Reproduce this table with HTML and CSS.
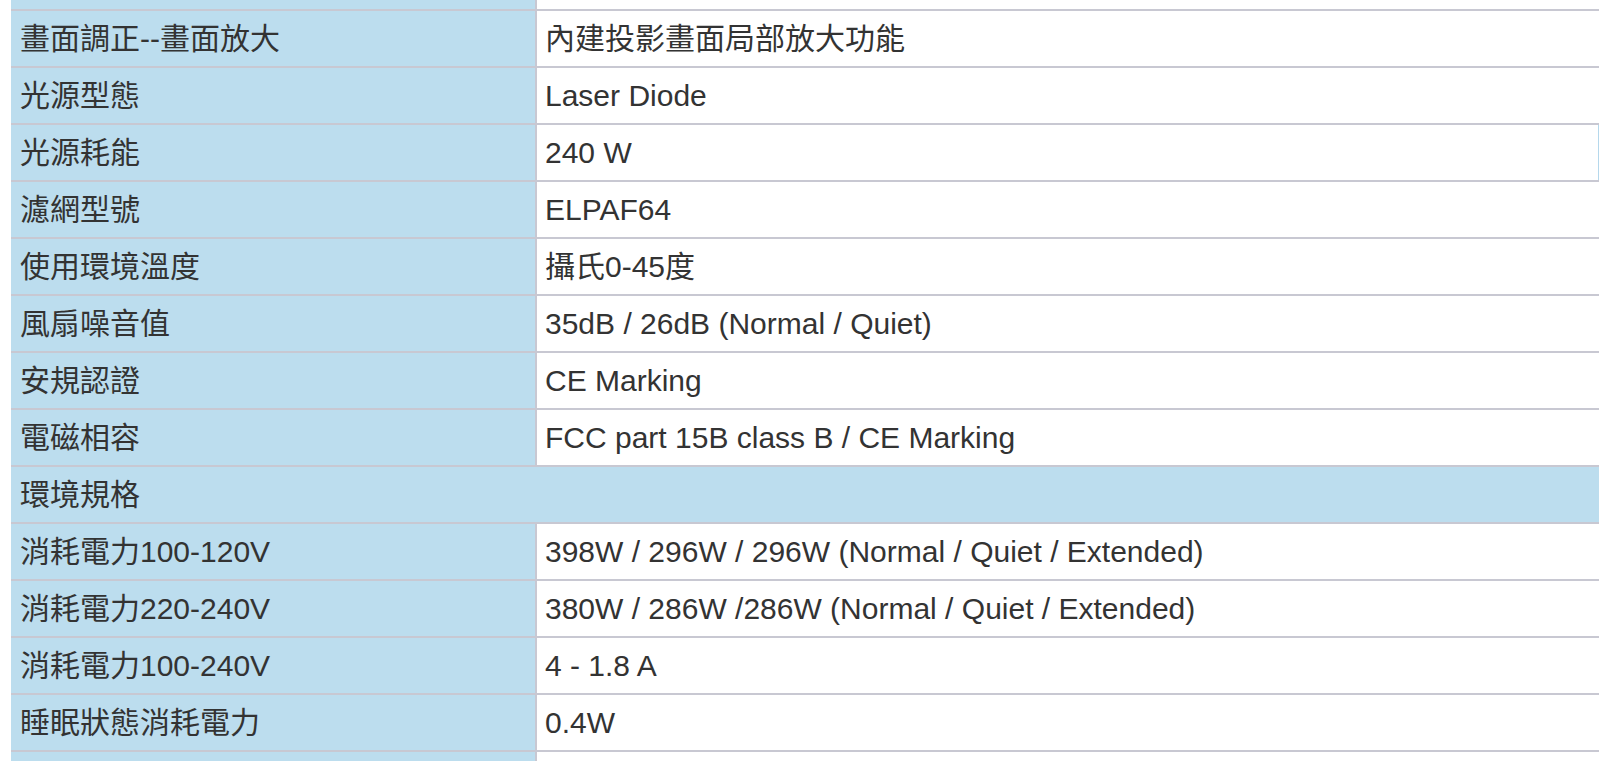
FILE: index.html
```html
<!DOCTYPE html>
<html lang="zh-Hant">
<head>
<meta charset="utf-8">
<title>規格表</title>
<link rel="stylesheet" href="styles.css">
</head>
<body>
<div class="wrap">
<table class="spec">
<tbody>
<tr><td class="k">&nbsp;</td><td class="v">&nbsp;</td></tr>
<tr><td class="k">畫面調正--畫面放大</td><td class="v">內建投影畫面局部放大功能</td></tr>
<tr><td class="k">光源型態</td><td class="v">Laser Diode</td></tr>
<tr><td class="k">光源耗能</td><td class="v edge">240 W</td></tr>
<tr><td class="k">濾網型號</td><td class="v">ELPAF64</td></tr>
<tr><td class="k">使用環境溫度</td><td class="v">攝氏0-45度</td></tr>
<tr><td class="k">風扇噪音值</td><td class="v">35dB / 26dB (Normal / Quiet)</td></tr>
<tr><td class="k">安規認證</td><td class="v">CE Marking</td></tr>
<tr><td class="k">電磁相容</td><td class="v">FCC part 15B class B / CE Marking</td></tr>
<tr><td class="sec" colspan="2">環境規格</td></tr>
<tr><td class="k">消耗電力100-120V</td><td class="v">398W / 296W / 296W (Normal / Quiet / Extended)</td></tr>
<tr><td class="k">消耗電力220-240V</td><td class="v">380W / 286W /286W (Normal / Quiet / Extended)</td></tr>
<tr><td class="k">消耗電力100-240V</td><td class="v">4 - 1.8 A</td></tr>
<tr><td class="k">睡眠狀態消耗電力</td><td class="v">0.4W</td></tr>
<tr><td class="k">&nbsp;</td><td class="v">&nbsp;</td></tr>
</tbody>
</table>
</div>
</body>
</html>
```

FILE: styles.css
```css
html, body {
  margin: 0;
  padding: 0;
  background: #ffffff;
  overflow: hidden;
  height: 100%;
}
.wrap {
  padding-left: 11px;
}
.spec {
  margin-top: -46px;
  width: 1588px;
  table-layout: fixed;
  border-collapse: separate;
  border-spacing: 0;
  font-family: "Liberation Sans", "Noto Sans CJK TC", sans-serif;
  font-size: 30px;
  line-height: 34px;
  color: #333333;
}
.spec td {
  box-sizing: border-box;
  height: 57px;
  padding: 0 8px 0 9px;
  vertical-align: middle;
  border-bottom: 2px solid #c8c8d2;
  white-space: nowrap;
  overflow: hidden;
}
.spec td.k {
  width: 526px;
  background: #bcddee;
  border-right: 2px solid #c8c8d2;
}
.spec td.v {
  background: #ffffff;
  padding-left: 8px;
}
.spec td.edge {
  box-shadow: inset -1px 0 0 #b5d8ec;
}
.spec td.sec {
  background: #bcddee;
}
```
